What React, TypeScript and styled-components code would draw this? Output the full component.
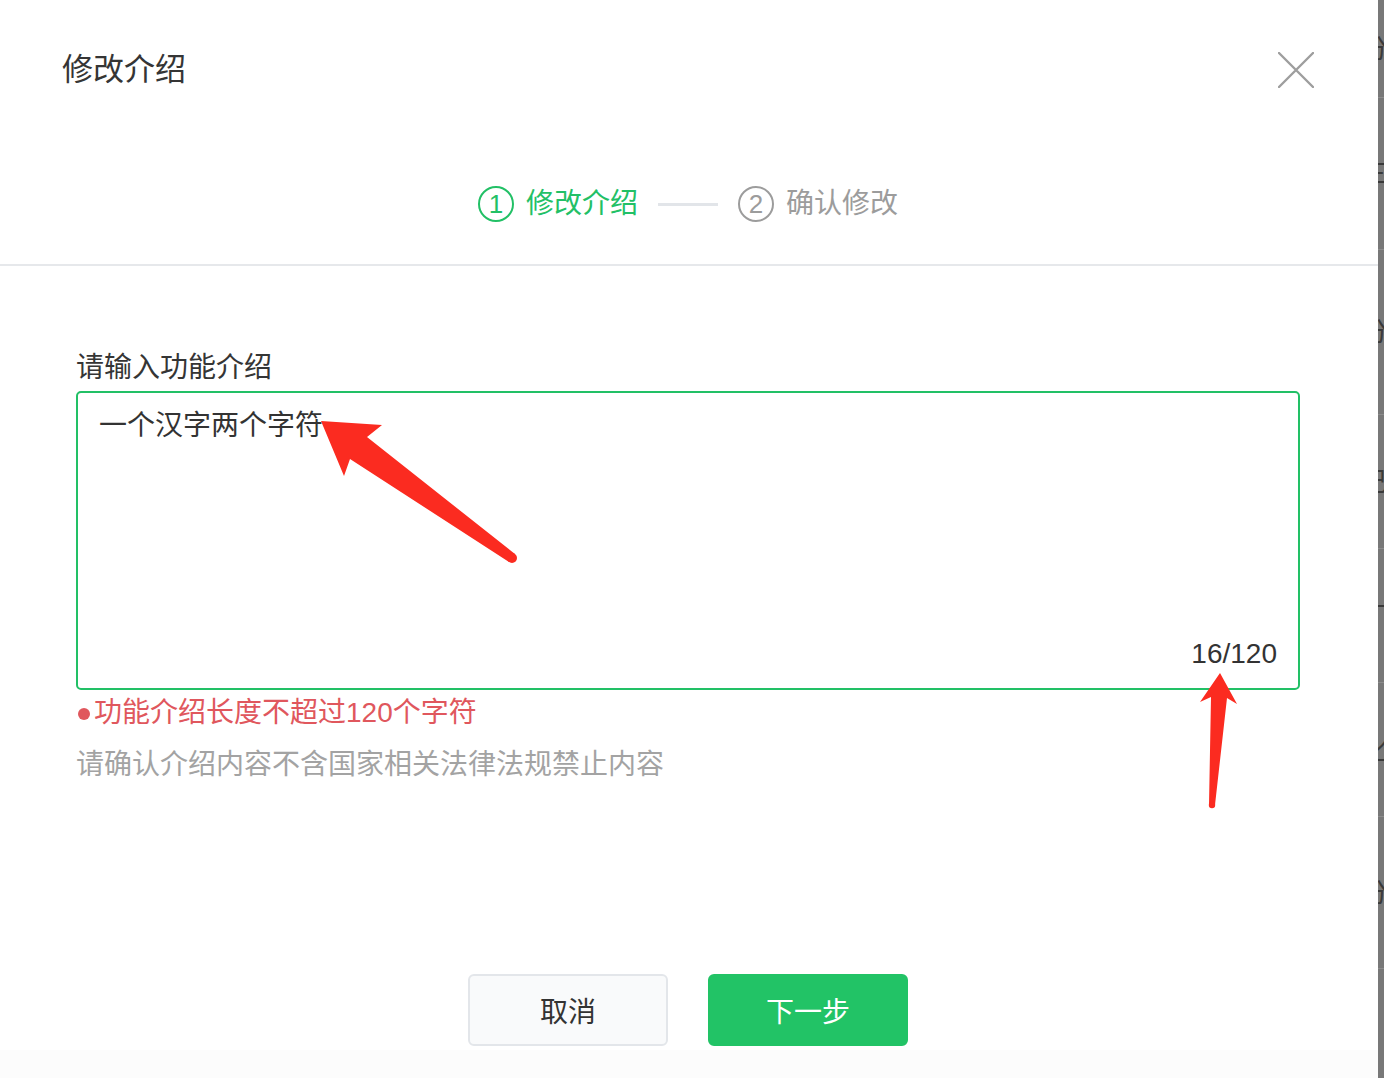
import React from "react";
import styled, { createGlobalStyle } from "styled-components";

const GlobalStyle = createGlobalStyle`
  html, body {
    margin: 0;
    padding: 0;
    background: #ffffff;
    overflow: hidden;
  }
  * { box-sizing: border-box; }
`;

const FONT = `"Liberation Sans", "Noto Sans CJK SC", sans-serif`;

const Page = styled.div`
  position: relative;
  width: 1384px;
  height: 1078px;
  display: flex;
  font-family: ${FONT};
  overflow: hidden;
`;

const Modal = styled.div`
  flex: 0 0 1378px;
  height: 1078px;
  background: #ffffff;
  border-top-right-radius: 6px;
  display: flex;
  flex-direction: column;
`;

const Backdrop = styled.div`
  flex: 1;
  background: #787878;
  display: flex;
  flex-direction: column;
  overflow: hidden;
`;

const BackdropRow = styled.div<{ $h?: number }>`
  height: ${(p) => p.$h ?? 152}px;
  flex: 0 0 auto;
  display: flex;
  align-items: center;
  border-bottom: 1px solid #8c8c8c;
  font-size: 26px;
  color: #3a3a3a;
  line-height: 1;
  white-space: nowrap;
`;

const BackdropGlyph = styled.span`
  margin-left: -16px;
`;

const Header = styled.div`
  height: 140px;
  padding: 0 64px 0 62px;
  display: flex;
  align-items: center;
  justify-content: space-between;
`;

const Title = styled.h1`
  margin: 0;
  font-size: 31px;
  font-weight: 400;
  color: #353535;
  line-height: 40px;
`;

const CloseButton = styled.button`
  width: 36px;
  height: 36px;
  padding: 0;
  border: none;
  background: transparent;
  cursor: pointer;
  display: flex;
`;

const Steps = styled.div`
  height: 124px;
  padding: 4px 2px 0 0;
  display: flex;
  align-items: center;
  justify-content: center;
  gap: 20px;
`;

const Step = styled.div<{ $active?: boolean }>`
  display: flex;
  align-items: center;
  gap: 12px;
  color: ${(p) => (p.$active ? "#22c066" : "#9c9c9c")};
  font-size: 28px;
  line-height: 40px;
`;

const StepNum = styled.span<{ $active?: boolean }>`
  width: 36px;
  height: 36px;
  border-radius: 50%;
  border: 2px solid ${(p) => (p.$active ? "#22c066" : "#9c9c9c")};
  display: flex;
  align-items: center;
  justify-content: center;
  font-size: 26px;
  line-height: 1;
`;

const StepLine = styled.span`
  width: 60px;
  height: 3px;
  background: #e2e5e9;
  margin-top: 1px;
`;

const Divider = styled.div`
  height: 2px;
  background: #e6e8eb;
`;

const Body = styled.div`
  flex: 1;
  padding: 82px 78px 0 76px;
  display: flex;
  flex-direction: column;
`;

const Label = styled.div`
  font-size: 28px;
  line-height: 40px;
  color: #353535;
  margin-bottom: 3px;
`;

const Field = styled.div`
  height: 299px;
  border: 2px solid #22c066;
  border-radius: 5px;
  padding: 13px 21px 14px 21px;
  display: flex;
  flex-direction: column;
`;

const FieldText = styled.div`
  font-size: 28px;
  line-height: 40px;
  color: #333333;
`;

const Counter = styled.div`
  margin-top: auto;
  align-self: flex-end;
  font-size: 28px;
  line-height: 40px;
  color: #333333;
`;

const ErrorText = styled.div`
  margin-top: 3px;
  padding-left: 2px;
  font-size: 28px;
  line-height: 40px;
  color: #e0575d;
  display: flex;
  align-items: center;
`;

const Dot = styled.span`
  width: 12px;
  height: 12px;
  border-radius: 50%;
  background: #e0575d;
  margin-right: 4px;
  margin-top: 2px;
`;

const Hint = styled.div`
  margin-top: 12px;
  font-size: 28px;
  line-height: 40px;
  color: #a3a3a3;
`;

const Footer = styled.div`
  margin-top: auto;
  display: flex;
  justify-content: center;
  gap: 40px;
  padding: 0 0 4px 0;
`;

const Button = styled.button<{ $primary?: boolean }>`
  width: 200px;
  height: 72px;
  border-radius: 6px;
  font-family: ${FONT};
  font-size: 28px;
  cursor: pointer;
  border: 2px solid ${(p) => (p.$primary ? "#22c366" : "#e3e6ea")};
  background: ${(p) => (p.$primary ? "#22c366" : "#f9fafb")};
  color: ${(p) => (p.$primary ? "#ffffff" : "#333333")};
`;

const BottomBand = styled.div`
  height: 28px;
  background: #fcfcfc;
`;

const Annotations = styled.svg`
  position: absolute;
  left: 0;
  top: 0;
  pointer-events: none;
`;

export default function App() {
  return (
    <>
      <GlobalStyle />
      <Page>
        <Modal>
          <Header>
            <Title>修改介绍</Title>
            <CloseButton aria-label="关闭">
              <svg width="36" height="36" viewBox="0 0 36 36">
                <path
                  d="M1 1 L35 35 M35 1 L1 35"
                  stroke="#9e9e9e"
                  strokeWidth="2.4"
                  strokeLinecap="round"
                />
              </svg>
            </CloseButton>
          </Header>
          <Steps>
            <Step $active>
              <StepNum $active>1</StepNum>
              修改介绍
            </Step>
            <StepLine />
            <Step>
              <StepNum>2</StepNum>
              确认修改
            </Step>
          </Steps>
          <Divider />
          <Body>
            <Label>请输入功能介绍</Label>
            <Field>
              <FieldText>一个汉字两个字符</FieldText>
              <Counter>16/120</Counter>
            </Field>
            <ErrorText>
              <Dot />
              功能介绍长度不超过120个字符
            </ErrorText>
            <Hint>请确认介绍内容不含国家相关法律法规禁止内容</Hint>
            <Footer>
              <Button>取消</Button>
              <Button $primary>下一步</Button>
            </Footer>
          </Body>
          <BottomBand />
        </Modal>
        <Backdrop>
          <BackdropRow $h={98}>
            <BackdropGlyph>分</BackdropGlyph>
          </BackdropRow>
          <BackdropRow>
            <BackdropGlyph>三</BackdropGlyph>
          </BackdropRow>
          <BackdropRow $h={165}>
            <BackdropGlyph>分</BackdropGlyph>
          </BackdropRow>
          <BackdropRow $h={134}>
            <BackdropGlyph>已</BackdropGlyph>
          </BackdropRow>
          <BackdropRow $h={134}>
            <BackdropGlyph>丁</BackdropGlyph>
          </BackdropRow>
          <BackdropRow $h={134}>
            <BackdropGlyph>化</BackdropGlyph>
          </BackdropRow>
          <BackdropRow>
            <BackdropGlyph>分</BackdropGlyph>
          </BackdropRow>
        </Backdrop>
        <Annotations width="1384" height="1078" viewBox="0 0 1384 1078">
          <g fill="#fb2b20">
            <polygon points="321,421 382,425 367,437 515,554 509,562 350,459 344,476" />
            <circle cx="512" cy="558" r="5" />
            <polygon points="1220,673 1237,704 1227,698 1215,805 1209,805 1211,697 1200,702" />
            <circle cx="1212" cy="805" r="3.2" />
          </g>
        </Annotations>
      </Page>
    </>
  );
}
